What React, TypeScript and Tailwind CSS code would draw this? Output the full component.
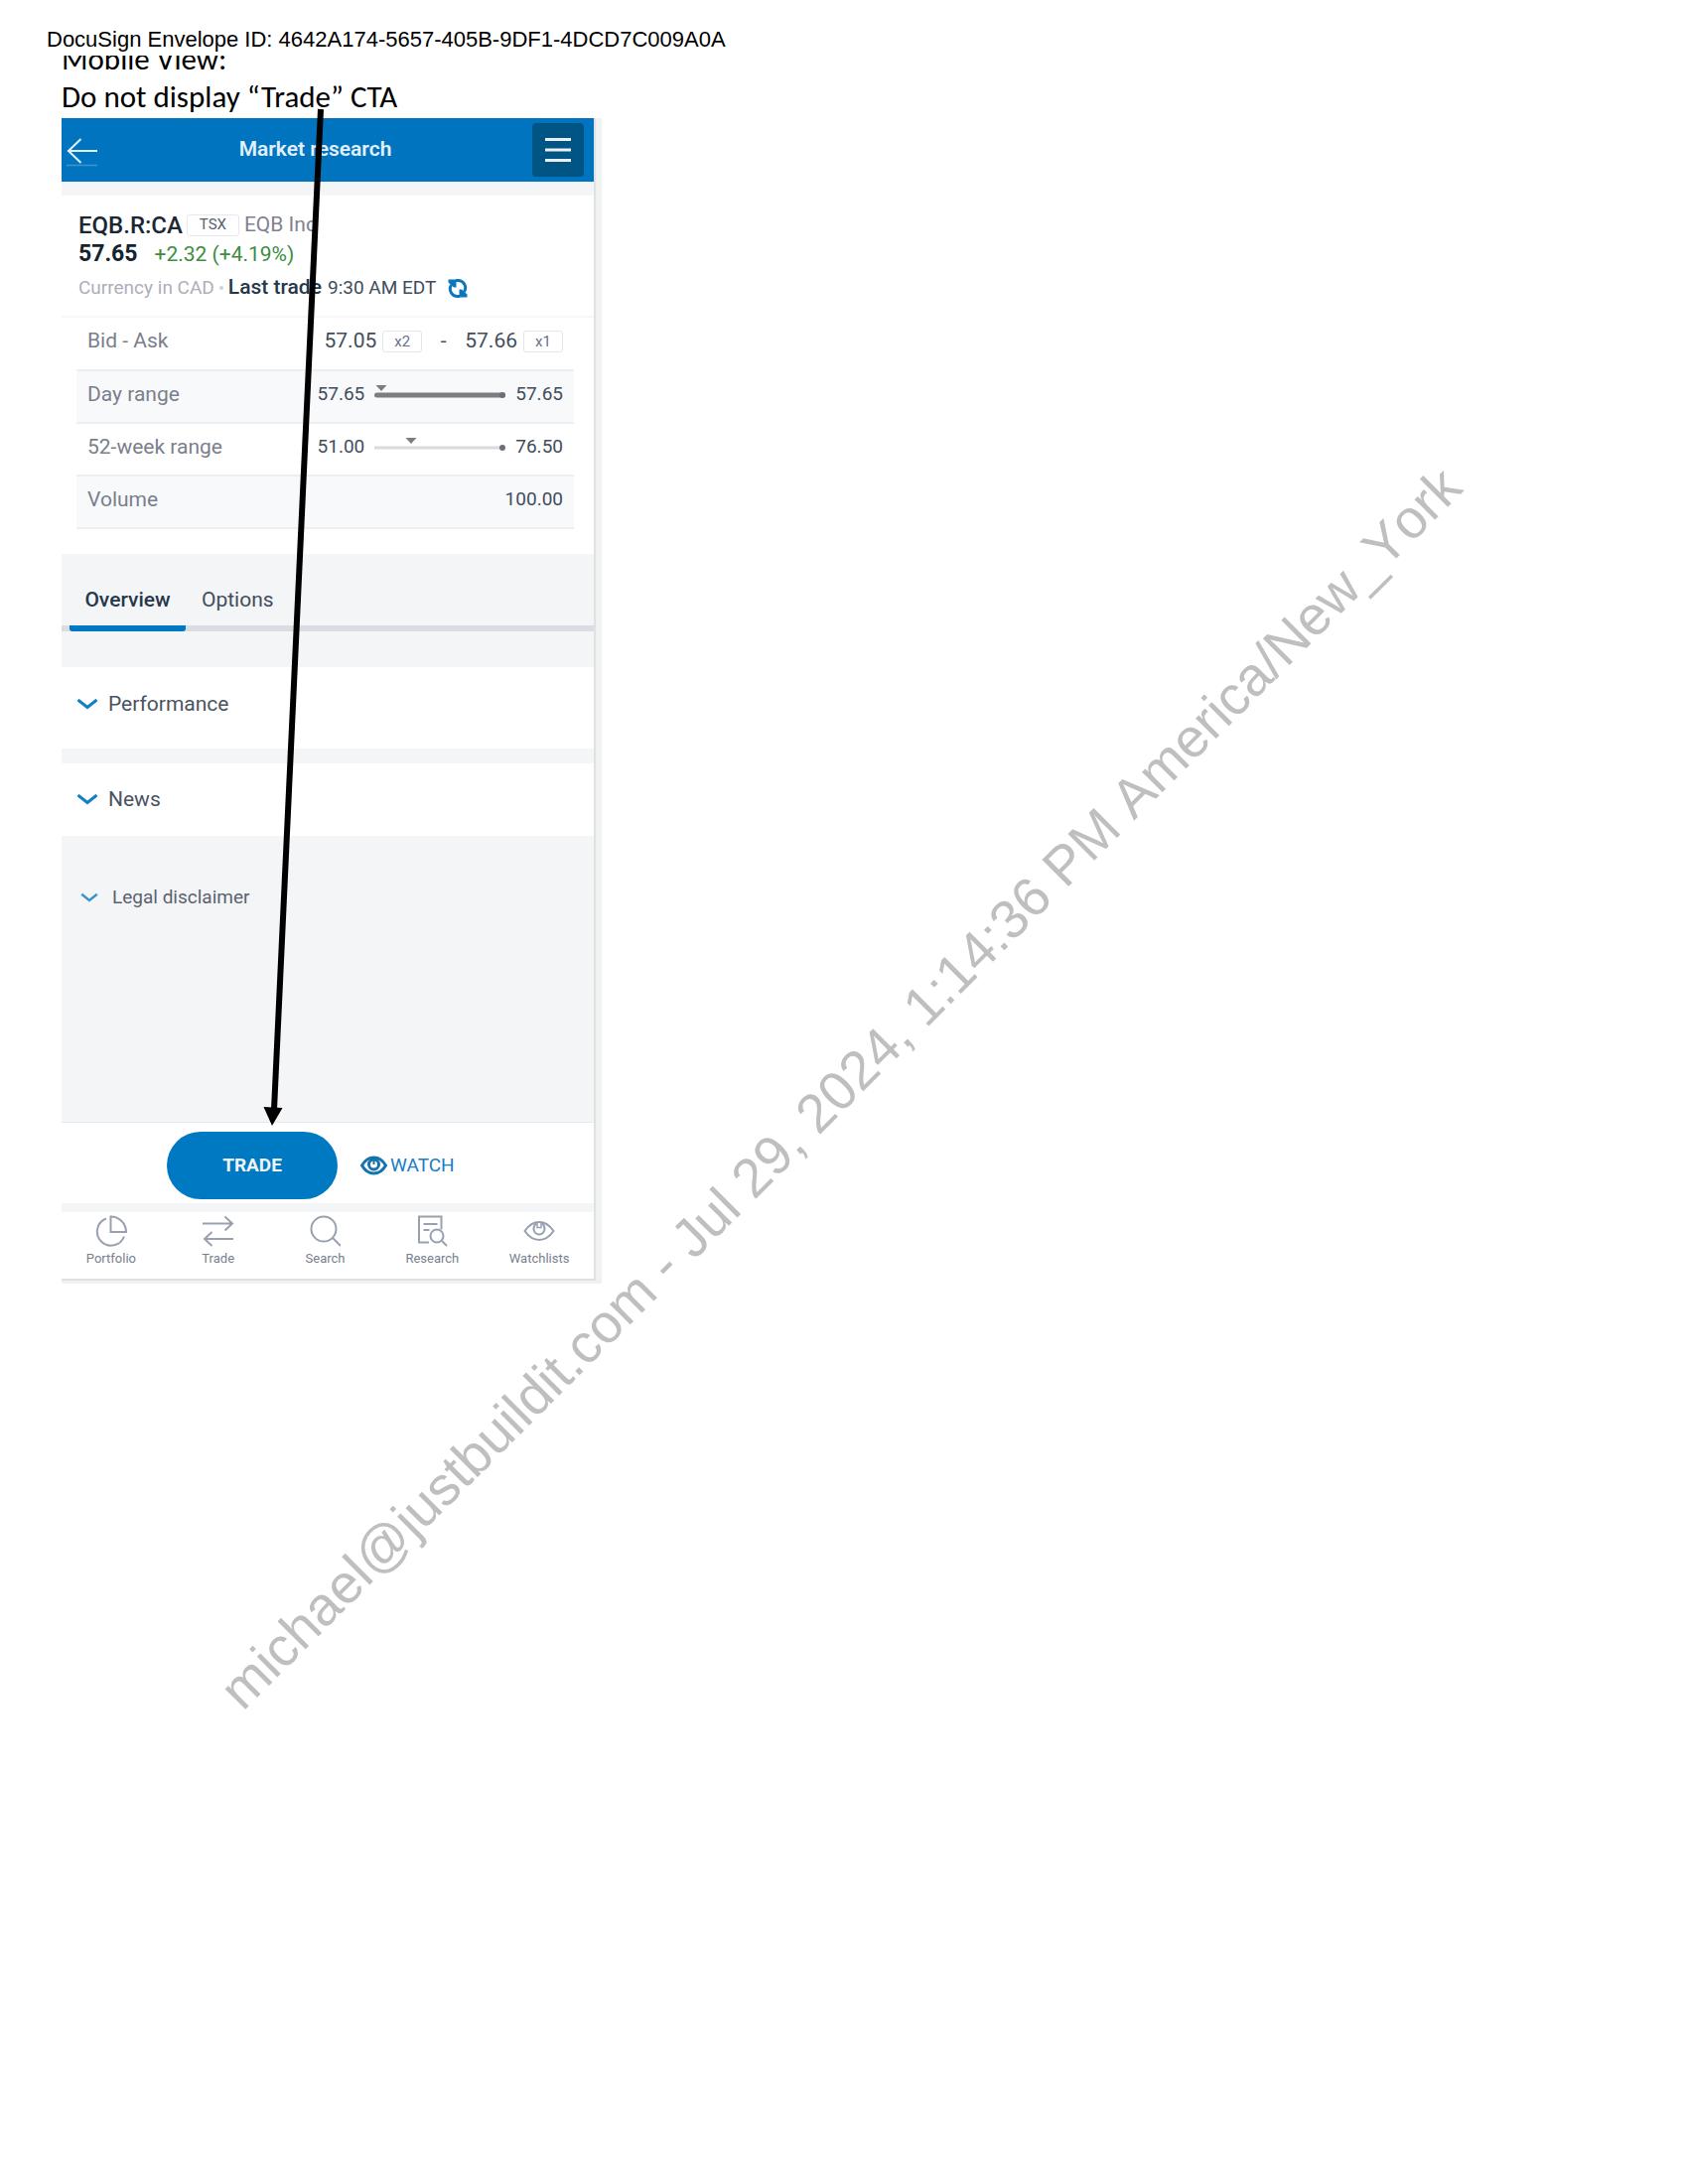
import React from "react";

function BackIcon() {
  return (
    <svg width="32" height="34" viewBox="0 0 32 34" fill="none" stroke="#e3f0f8" strokeWidth="2">
      <path d="M31 18H1M14.500 6L2 18l12.500 12" />
      <path d="M0 32.500h31" stroke="#3d97cf" strokeWidth="1.500" />
    </svg>
  );
}

function MenuIcon() {
  return (
    <svg width="28" height="26" viewBox="0 0 28 26" stroke="#e9f1f5" strokeWidth="3">
      <path d="M1 2.500h26M1 13h26M1 23.500h26" />
    </svg>
  );
}

function RefreshIcon() {
  return (
    <svg width="20" height="21" viewBox="0 0 20 21" fill="none">
      <path d="M8 2.500h2a7.500 7.500 0 0 1 6.500 11.500M12 18.500H10A7.500 7.500 0 0 1 3.500 7" stroke="#0b78be" strokeWidth="3" />
      <path d="M0.500 1.500H8.500V9.500H6L0.500 4.500ZM19.500 19.500H11.500V11.500H14L19.500 16.500Z" fill="#0b78be" />
    </svg>
  );
}

function Chevron({ small = false }: { small?: boolean }) {
  return (
    <svg width={small ? 18 : 22} height={small ? 10 : 12} viewBox="0 0 22 12" fill="none">
      <path d="M1.500 2L11 9.500L20.500 2" stroke={small ? "#3a93cc" : "#1480c4"} strokeWidth="3" />
    </svg>
  );
}

function EyeIcon({ bold = false }: { bold?: boolean }) {
  return (
    <svg width={bold ? 27 : 32} height={bold ? 20 : 32} viewBox={bold ? "0 0 27 20" : "0 0 32 32"} fill="none">
      {bold ? (
        <g stroke="#1673ae">
          <path d="M1.500 10C5 4 9 2 13.500 2S22 4 25.500 10C22 16 18 18 13.500 18S5 16 1.500 10Z" strokeWidth="3" />
          <circle cx="13.500" cy="9" r="5" strokeWidth="3" />
          <path d="M13.500 4v5" strokeWidth="2" />
        </g>
      ) : (
        <g stroke="#99a1b0" strokeWidth="2">
          <path d="M1.500 16C6 9.500 11 7 16 7s10 2.500 14.500 9C26 22.500 21 25 16 25S6 22.500 1.500 16Z" />
          <path d="M13 8.500c-2 1.500-2.500 3.500-2.500 5.500a5.500 5.500 0 0 0 11 0c0-2-.5-4-2.500-5.500" />
          <path d="M14 8v4.500h4v-4.500" strokeWidth="1.500" />
        </g>
      )}
    </svg>
  );
}

function NavIcon({ children }: { children: React.ReactNode }) {
  return (
    <svg width="32" height="32" viewBox="0 0 32 32" fill="none" stroke="#99a1b0" strokeWidth="2">
      {children}
    </svg>
  );
}

const navItems = [
  {
    label: "Portfolio",
    icon: (
      <NavIcon>
        <path d="M11 3.500a14 14 0 1 0 18 18" />
        <path d="M15.500 1.500V17H31A15.500 15.500 0 0 0 15.500 1.500Z" />
      </NavIcon>
    ),
  },
  {
    label: "Trade",
    icon: (
      <NavIcon>
        <path d="M0 8.500h30M22.500 1.500l7.500 7l-7.500 7M31 24H2M9.500 17L2 24l7.500 7" />
      </NavIcon>
    ),
  },
  {
    label: "Search",
    icon: (
      <NavIcon>
        <circle cx="15" cy="14" r="12.500" />
        <path d="M24 23l8 8" />
      </NavIcon>
    ),
  },
  {
    label: "Research",
    icon: (
      <NavIcon>
        <path d="M13 27.500H3V1.500h22.500v13M7.500 9h14M7.500 15h6" />
        <circle cx="21" cy="21" r="6.500" />
        <path d="M26 26l5 5" />
      </NavIcon>
    ),
  },
  { label: "Watchlists", icon: <EyeIcon /> },
];

function RangeBar({ marker, solid = false }: { marker: number; solid?: boolean }) {
  return (
    <svg width="132" height="24" viewBox="0 0 132 24">
      {solid ? (
        <path d="M2.500 12h127" stroke="#7b7d80" strokeWidth="5" strokeLinecap="round" />
      ) : (
        <path d="M0 12h129" stroke="#d9dadc" strokeWidth="3" />
      )}
      <circle cx="129" cy="12" r="3" fill="#6b7078" />
      <path d={`M${marker - 5.5} 2h11l-5.500 6z`} fill="#7b7d80" />
    </svg>
  );
}

function Size({ children }: { children: React.ReactNode }) {
  return (
    <span className="inline-flex h-[22px] w-10 items-center justify-center rounded-[3px] border border-[#e3e5ee] text-[15px] text-[#68718a]">
      {children}
    </span>
  );
}

function Row({ label, striped = false, children }: { label: string; striped?: boolean; children: React.ReactNode }) {
  return (
    <tr className={striped ? "border-b-2 border-[#eceef0] bg-[#f8f9fb]" : "border-b-2 border-[#eceef0]"}>
      <th scope="row" className="h-[53px] pb-1 pl-[11px] text-left text-[21px] font-normal text-[#7a7f8c]">
        {label}
      </th>
      <td className="pr-[11px] pb-1">
        <div className="flex items-center justify-end">{children}</div>
      </td>
    </tr>
  );
}

function Phone() {
  return (
    <section className="w-full max-w-[544px] border-r-[6px] border-b-[3px] border-[#f0f1f1] font-['Roboto',sans-serif]">
      <div className="overflow-hidden border-r-2 border-b-2 border-[#dfe1e3] bg-[#f4f5f7]">
        <header className="flex h-16 items-center justify-between bg-[#0074be] pr-[10px] pl-[5px]">
          <button type="button" aria-label="Back" className="w-8">
            <BackIcon />
          </button>
          <h1 className="text-[21px] font-semibold text-[#e1effa]">Market research</h1>
          <button type="button" aria-label="Menu" className="flex h-[54px] w-[52px] items-center justify-center rounded-[4px] bg-[#005584]">
            <MenuIcon />
          </button>
        </header>

        <div className="mt-[14px] border-b-2 border-[#f6f7f8] bg-white pt-[15px] pb-[10px] pl-[17px]">
          <div className="flex h-[29px] items-center gap-1 text-[21px]">
            <span className="text-2xl font-medium text-[#1b2733]">EQB.R:CA</span>
            <span className="flex h-[22px] w-[53px] items-center justify-center rounded-[3px] border border-[#e6e8f0] text-[15px] text-[#555f6e]">
              TSX
            </span>
            <span className="ml-px text-[#7f8391]">EQB Inc</span>
          </div>
          <div className="flex h-[31px] items-center gap-[17px]">
            <span className="text-[23px] font-bold text-[#15232e]">57.65</span>
            <span className="text-[21px] text-[#3d8d3f]">+2.32 (+4.19%)</span>
          </div>
          <div className="flex h-9 items-center gap-[5px] text-[19px]">
            <span className="text-[#adafba]">Currency in CAD</span>
            <span className="h-1 w-1 rounded-full bg-[#cfd1d6]" />
            <span className="text-[21px] font-medium text-[#26384b]">Last trade</span>
            <span className="ml-px text-[#414d5c]">9:30 AM EDT</span>
            <button type="button" aria-label="Refresh" className="ml-[7px]">
              <RefreshIcon />
            </button>
          </div>
        </div>

        <div className="bg-white pr-5 pb-[25px] pl-[15px]">
          <table className="w-full border-collapse text-[19px] text-[#414d5c]">
            <tbody>
              <Row label="Bid - Ask">
                <span className="text-[21px]">57.05</span>
                <span className="ml-[6px] flex"><Size>x2</Size></span>
                <span className="w-[43px] text-center text-[21px]">-</span>
                <span className="text-[21px]">57.66</span>
                <span className="ml-[6px] flex"><Size>x1</Size></span>
              </Row>
              <Row label="Day range" striped>
                <span className="mr-[10px]">57.65</span>
                <RangeBar marker={7} solid />
                <span className="ml-[10px]">57.65</span>
              </Row>
              <Row label="52-week range">
                <span className="mr-[10px]">51.00</span>
                <RangeBar marker={37} />
                <span className="ml-[10px]">76.50</span>
              </Row>
              <Row label="Volume" striped>
                <span>100.00</span>
              </Row>
            </tbody>
          </table>
        </div>

        <div role="tablist" className="mt-[14px] mb-[36px] flex border-b-[6px] border-[#d9dde1] pl-2 text-[21px]">
          <button
            type="button"
            role="tab"
            aria-selected="true"
            className="-mb-[6px] h-16 w-[117px] rounded-b-[3px] border-b-[6px] border-[#0077c2] pt-2 font-medium text-[#26384b]"
          >
            Overview
          </button>
          <button type="button" role="tab" aria-selected="false" className="h-[58px] px-4 pt-2 text-[#414d5c]">
            Options
          </button>
        </div>

        <button type="button" className="mb-[15px] flex w-full items-center gap-[10px] bg-white pt-[23px] pr-4 pb-[31px] pl-[15px] text-[21px] leading-7 text-[#4a5361]">
          <Chevron />
          Performance
        </button>
        <button type="button" className="flex w-full items-center gap-[10px] bg-white pt-[22px] pr-4 pb-[23px] pl-[15px] text-[21px] leading-7 text-[#4a5361]">
          <Chevron />
          News
        </button>
        <button type="button" className="mt-12 mb-[212px] flex w-full items-center gap-[14px] pl-[19px] text-[19px] leading-7 text-[#5a6270]">
          <Chevron small />
          Legal disclaimer
        </button>

        <div className="flex items-center border-t border-[#e6e8ea] bg-white pt-[9px] pb-1 pl-[106px]">
          <button type="button" className="h-[68px] w-[172px] rounded-full bg-[#0079c3] text-[19px] font-bold text-[#edf5fb]">
            TRADE
          </button>
          <button type="button" className="ml-[23px] flex items-center gap-[3px] text-[19px] text-[#1b7dc2]">
            <EyeIcon bold />
            WATCH
          </button>
        </div>

        <nav className="mt-[9px] -ml-1 bg-white pt-[3px] pr-px pb-3">
          <div className="grid grid-cols-5">
            {navItems.map((item) => (
              <a key={item.label} href="#" className="flex flex-col items-center gap-1 text-[13px] leading-4 text-[#777f90]">
                {item.icon}
                {item.label}
              </a>
            ))}
          </div>
        </nav>
      </div>
    </section>
  );
}

export default function App() {
  return (
    <main className="relative min-h-screen overflow-hidden bg-white">
      <p className="relative z-10 h-14 bg-white pt-[26px] pl-[47px] font-['Liberation_Sans',sans-serif] text-[22px] leading-7 text-black">
        DocuSign Envelope ID: 4642A174-5657-405B-9DF1-4DCD7C009A0A
      </p>
      <div className="-mt-4 px-[62px]">
        <div className="font-['Carlito','Lato',sans-serif] text-[31px] leading-[38px] text-black">
          <p>Mobile View:</p>
          <p>Do not display “Trade” CTA</p>
        </div>
        <div className="mt-[3px]">
          <Phone />
        </div>
      </div>

      <svg className="pointer-events-none absolute top-[108px] left-[264px]" width="64" height="1028" viewBox="0 0 64 1028">
        <path d="M59 2L12 1010" stroke="#000" strokeWidth="6" />
        <path d="M1.500 1007L20.500 1008L10 1026Z" fill="#000" />
      </svg>

      <p className="pointer-events-none absolute top-[1678px] left-[243px] origin-[0_45px] -rotate-45 font-['Liberation_Sans',sans-serif] text-[55px] leading-[56px] whitespace-nowrap text-[#bfbfbf] [font-kerning:none]">
        michael@justbuildit.com - Jul 29, 2024, 1:14:36 PM America/New_York
      </p>
    </main>
  );
}
